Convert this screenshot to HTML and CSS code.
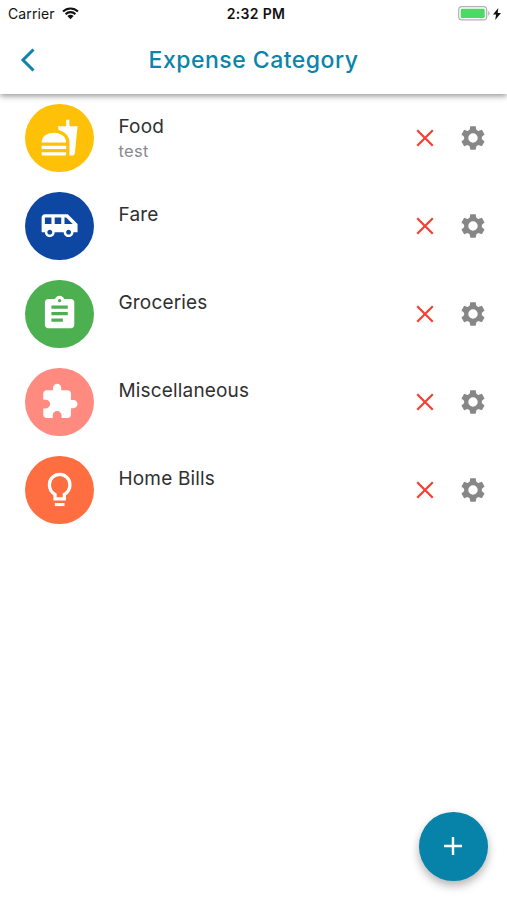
FILE: index.html
```html
<!DOCTYPE html>
<html lang="en">
<head>
<meta charset="utf-8">
<title>Expense Category</title>
<link rel="stylesheet" href="styles.css">
</head>
<body>
<svg class="defs" aria-hidden="true">
  <symbol id="close" viewBox="0 0 18 18"><path d="M1.2 1.2 16.8 16.8M16.8 1.2 1.2 16.8" fill="none" stroke="currentColor" stroke-width="2.3"/></symbol>
  <symbol id="gear" viewBox="-12 -12 24 24">
    <circle r="6.800" fill="none" stroke="currentColor" stroke-width="4.200"/>
    <path id="teeth" d="M-2.700-11.800h5.400l.8 4.500h-7zM-2.700 11.800h5.400l.8-4.500h-7z"/>
    <use href="#teeth" transform="rotate(60)"/>
    <use href="#teeth" transform="rotate(120)"/>
  </symbol>
</svg>
<div class="screen">
  <header class="header">
    <div class="status">
      <div class="carrier"><span>Carrier</span>
        <svg class="wifi" viewBox="0 0 18 13"><path d="M1.1 4.7a11.3 11.3 0 0 1 15.8 0M3.8 7.5a7.4 7.4 0 0 1 10.4 0" fill="none" stroke="currentColor" stroke-width="2.3"/><path d="M9 12.8 5.7 9.5a4.7 4.7 0 0 1 6.6 0z"/></svg>
      </div>
      <div class="time">2:32 PM</div>
      <div class="power">
        <svg class="battery" viewBox="0 0 33 15"><rect x=".7" y=".7" width="28" height="13.2" rx="3.2" fill="#fff" stroke="#b1b1b1" stroke-width="1.2"/><rect x="2.7" y="2.7" width="24" height="9.2" rx="1.2" fill="#4cd964"/><path d="M30.2 5v4.8c1.8-.6 1.8-4.2 0-4.8z" fill="#b1b1b1"/></svg>
        <svg class="bolt" viewBox="0 0 8 12"><path d="M5.3 0 0 6.6h3.1L2.2 12 8 4.9H4.7z"/></svg>
      </div>
    </div>
    <div class="bar">
      <svg class="back" viewBox="0 0 16 24"><path d="M13.500 1.500 3 12l10.500 10.500" fill="none" stroke="currentColor" stroke-width="3"/></svg>
      <h1>Expense Category</h1>
    </div>
  </header>
  <main class="list">
    <div class="row">
      <div class="avatar food"><svg viewBox="0 0 24 24"><path d="M18.060 22.990h1.660c.84 0 1.530-.64 1.630-1.460L23 5.050h-5V1h-1.970v4.050h-4.970l.3 2.340c1.710.47 3.310 1.320 4.270 2.260 1.440 1.420 2.430 2.890 2.430 5.290v8.050zM1 21.990V21h15.030v.99c0 .55-.45 1-1.010 1H2.010c-.56 0-1.010-.45-1.010-1zm15.030-7c0-8-15.030-8-15.030 0h15.030zM1.020 17h15v2h-15z"/></svg></div>
      <div class="text"><div class="name">Food</div><div class="note">test</div></div>
      <svg class="close"><use href="#close"/></svg><svg class="gear"><use href="#gear"/></svg>
    </div>
    <div class="row">
      <div class="avatar fare"><svg viewBox="0 0 24 24"><path d="M17 5H3c-1.100 0-2 .89-2 2v9h2c0 1.650 1.340 3 3 3s3-1.350 3-3h5.500c0 1.650 1.340 3 3 3s3-1.350 3-3H23v-5l-6-6zM3 11V7h4v4H3zm3 6.500c-.83 0-1.500-.67-1.500-1.500s.67-1.500 1.500-1.500 1.500.67 1.500 1.500-.67 1.500-1.500 1.500zm7-6.500H9V7h4v4zm4.500 6.500c-.83 0-1.500-.67-1.500-1.500s.67-1.500 1.500-1.500 1.500.67 1.500 1.500-.67 1.500-1.500 1.500zM15 11V7h1l4 4h-5z"/></svg></div>
      <div class="text"><div class="name">Fare</div></div>
      <svg class="close"><use href="#close"/></svg><svg class="gear"><use href="#gear"/></svg>
    </div>
    <div class="row">
      <div class="avatar groceries"><svg viewBox="0 0 24 24"><path d="M19 3h-4.180C14.400 1.840 13.300 1 12 1c-1.300 0-2.400.84-2.820 2H5c-1.100 0-2 .9-2 2v14c0 1.100.9 2 2 2h14c1.100 0 2-.9 2-2V5c0-1.100-.9-2-2-2zm-7 0c.55 0 1 .45 1 1s-.45 1-1 1-1-.45-1-1 .45-1 1-1zm2 14H7v-2h7v2zm3-4H7v-2h10v2zm0-4H7V7h10v2z"/></svg></div>
      <div class="text"><div class="name">Groceries</div></div>
      <svg class="close"><use href="#close"/></svg><svg class="gear"><use href="#gear"/></svg>
    </div>
    <div class="row">
      <div class="avatar misc"><svg viewBox="0 0 24 24"><path d="M20.500 11H19V7c0-1.100-.9-2-2-2h-4V3.500C13 2.120 11.880 1 10.500 1S8 2.120 8 3.500V5H4c-1.100 0-1.990.9-1.990 2v3.800H3.500c1.490 0 2.700 1.210 2.700 2.700s-1.210 2.700-2.700 2.700H2V20c0 1.100.9 2 2 2h3.800v-1.500c0-1.490 1.210-2.700 2.700-2.700 1.490 0 2.700 1.210 2.700 2.700V22H17c1.100 0 2-.9 2-2v-4h1.500c1.380 0 2.500-1.120 2.500-2.500S21.880 11 20.500 11z"/></svg></div>
      <div class="text"><div class="name">Miscellaneous</div></div>
      <svg class="close"><use href="#close"/></svg><svg class="gear"><use href="#gear"/></svg>
    </div>
    <div class="row">
      <div class="avatar bills"><svg viewBox="0 0 24 24"><path d="M9.100 20.200h5.900v1.900H9.100z"/><path d="M9.200 17.700v-2.800C7.100 13.700 5.750 11.700 5.750 9a6.300 6.300 0 0 1 12.600 0c0 2.700-1.350 4.700-3.450 5.900v2.800z" fill="none" stroke="currentColor" stroke-width="2"/></svg></div>
      <div class="text"><div class="name">Home Bills</div></div>
      <svg class="close"><use href="#close"/></svg><svg class="gear"><use href="#gear"/></svg>
    </div>
  </main>
  <button class="fab" aria-label="Add"><svg viewBox="0 0 18 18"><path d="M9 0v18M0 9h18" stroke="currentColor" stroke-width="2.400"/></svg></button>
</div>
</body>
</html>
```
FILE: styles.css
```css
* { box-sizing: border-box; }
body { margin: 0; background: #fff; font-family: Inter, "Liberation Sans", sans-serif; }
svg { display: block; flex: none; fill: currentColor; }
.defs { position: absolute; width: 0; height: 0; }
.screen { position: relative; height: 900px; overflow: hidden; }
.header { height: 94px; background: #fff; box-shadow: 0 2px 6px rgba(0, 0, 0, .42); }
.status { display: grid; grid-template-columns: 1fr auto 1fr; align-items: center; height: 27px; padding: 0 6px 0 8px; color: #111; font-size: 14px; }
.carrier { display: flex; align-items: center; gap: 7px; letter-spacing: .12px; }
.wifi { width: 17px; height: 12.5px; }
.time { padding-left: 3px; font-weight: 600; font-size: 14px; letter-spacing: .3px; }
.power { display: flex; justify-content: flex-end; align-items: center; gap: 2px; }
.battery { width: 33px; height: 15px; }
.bolt { width: 8px; height: 12px; }
.bar { display: grid; grid-template-columns: 60px 1fr 60px; align-items: center; height: 66px; color: #0a84a8; }
.back { width: 16px; height: 24px; margin-left: 20px; }
h1 { margin: 0; text-align: center; white-space: nowrap; font-size: 23px; font-weight: 500; letter-spacing: .5px; }
.list { padding-top: 9.500px; }
.row { display: flex; align-items: center; height: 68.500px; margin-bottom: 19.500px; padding: 0 22.500px 0 25px; }
.avatar { display: flex; align-items: center; justify-content: center; width: 68.500px; height: 68.500px; border-radius: 50%; color: #fff; }
.avatar svg { width: 39.200px; height: 39.200px; }
.food { background: #ffc107; }
.fare { background: #0d47a1; }
.groceries { background: #4caf50; }
.misc { background: #ff8a80; }
.bills { background: #ff6e40; }
.text { flex: 1; align-self: flex-start; padding: 10px 0 0 25px; }
.name { color: #303030; font-size: 19px; line-height: 25px; letter-spacing: .16px; }
.note { color: #8a8a8a; font-size: 16.500px; line-height: 24px; letter-spacing: .3px; }
.close { width: 18px; height: 18px; margin-right: 26.500px; color: #f44336; }
.gear { width: 24px; height: 24px; color: #878787; }
.fab { position: absolute; right: 19.500px; bottom: 19.500px; display: flex; align-items: center; justify-content: center; width: 68.500px; height: 68.500px; padding: 0; border: 0; border-radius: 50%; background: #0782a8; color: #fff; box-shadow: 0 4px 8px rgba(0, 0, 0, .24), 0 6px 12px rgba(0, 0, 0, .08); }
.fab svg { width: 18px; height: 18px; }
```
